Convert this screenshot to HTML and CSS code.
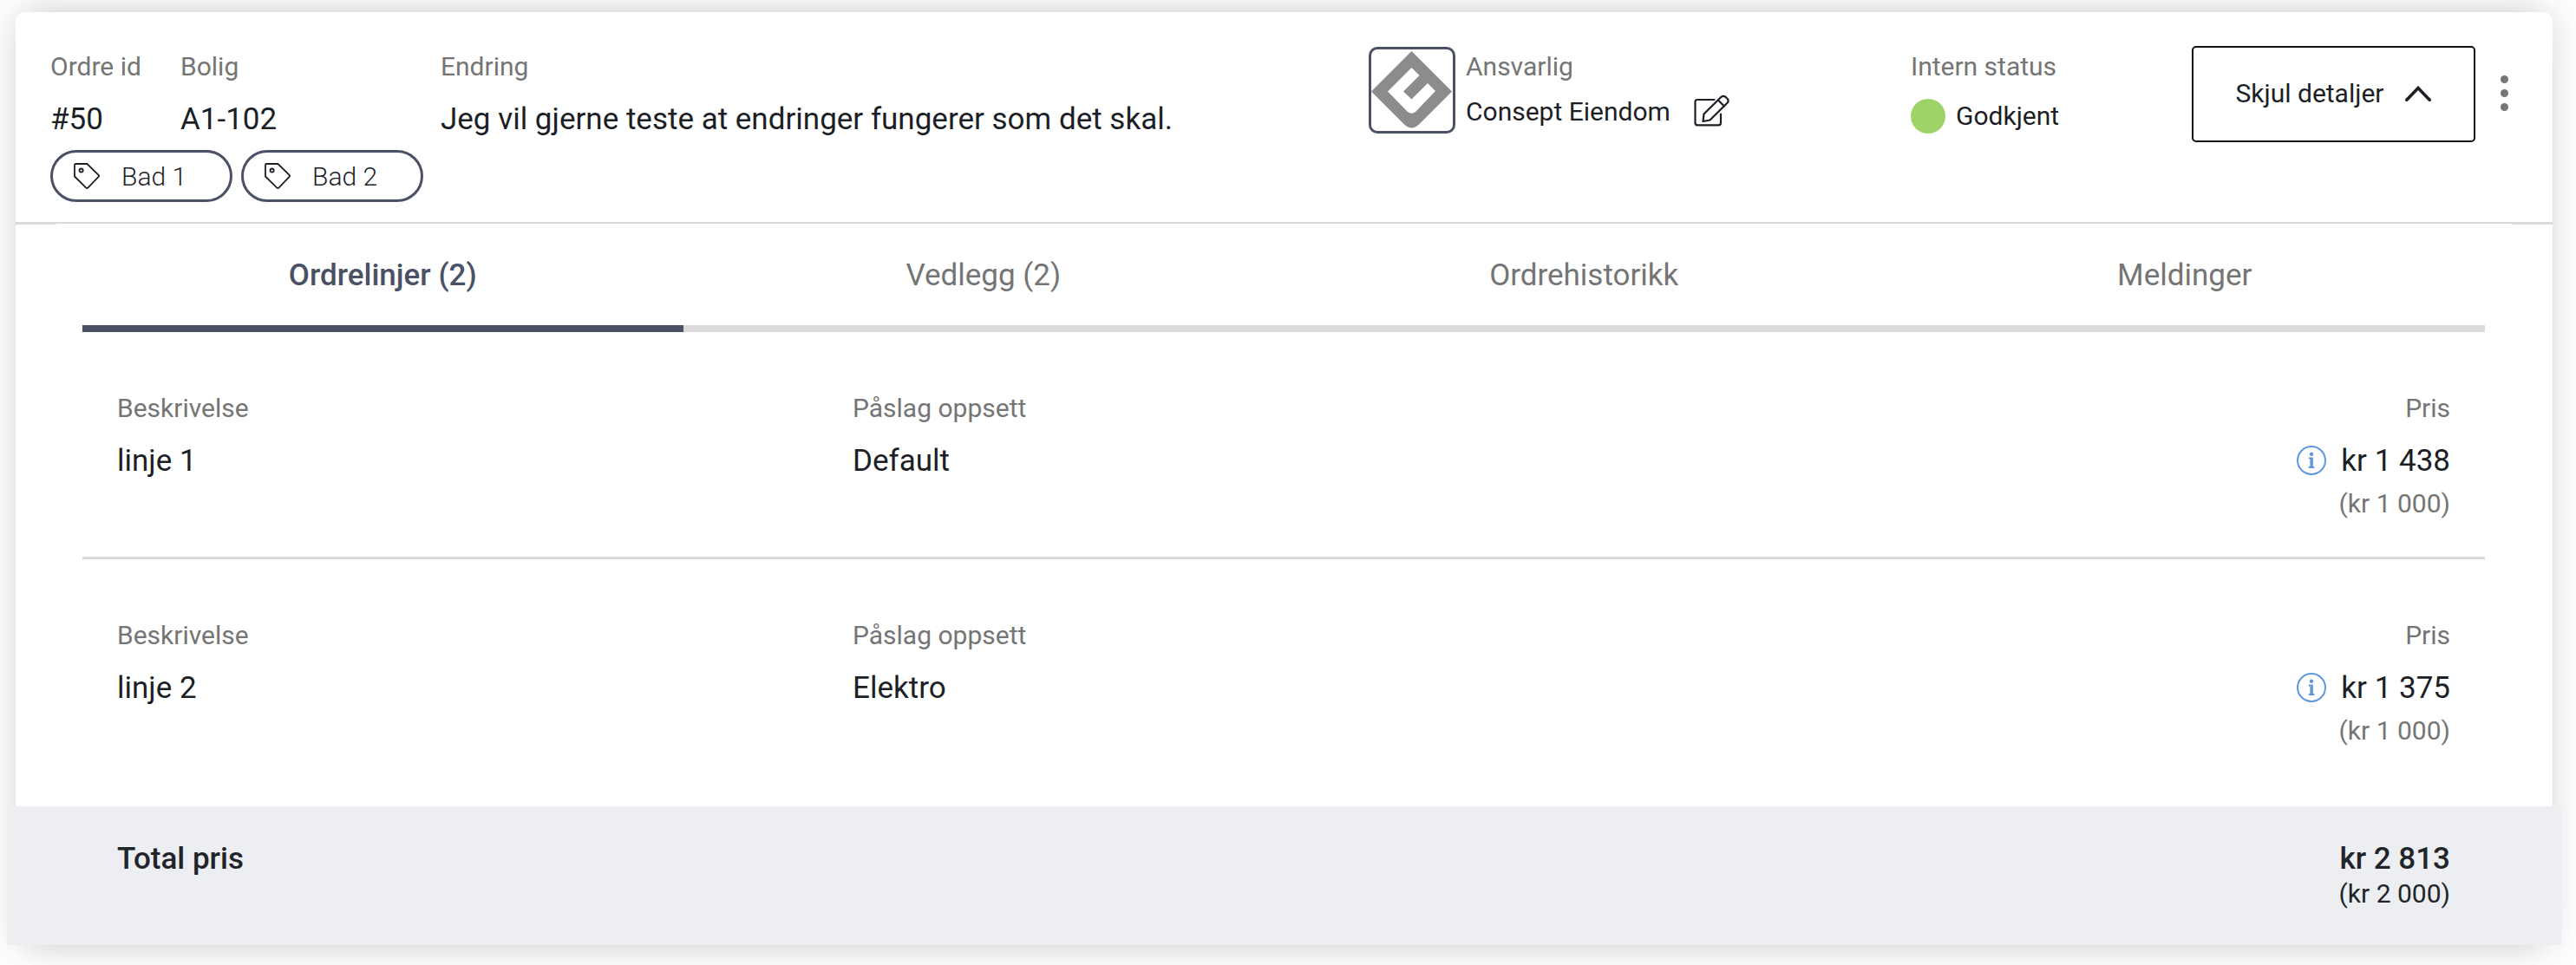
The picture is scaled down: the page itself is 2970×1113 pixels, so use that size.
FILE: index.html
```html
<!DOCTYPE html>
<html lang="no">
<head>
    <meta charset="UTF-8">
    <meta name="viewport" content="width=device-width, initial-scale=1.0">
    <title>Ordre #50</title>
    <link rel="stylesheet" href="styles.css">
</head>
<body>
    <div class="card">
        <div class="card-header">
            <div class="order">
                <div class="order-fields">
                    <div class="field order-id">
                        <div class="label">Ordre id</div>
                        <div class="value">#50</div>
                    </div>
                    <div class="field order-home">
                        <div class="label">Bolig</div>
                        <div class="value">A1-102</div>
                    </div>
                    <div class="field">
                        <div class="label">Endring</div>
                        <div class="value">Jeg vil gjerne teste at endringer fungerer som det skal.</div>
                    </div>
                </div>
                <div class="chips">
                    <div class="chip">
                        <svg class="chip-icon" viewBox="0 0 30 30">
                            <path d="M2.3 1H15.4L28.6 13.9Q29.5 15 28.6 16L16.4 28.6Q15.3 29.5 14.3 28.6L1 15.5V2.3Q1 1 2.3 1Z"/>
                            <circle cx="8.6" cy="8.6" r="2.1"/>
                        </svg>
                        <span>Bad 1</span>
                    </div>
                    <div class="chip">
                        <svg class="chip-icon" viewBox="0 0 30 30">
                            <path d="M2.3 1H15.4L28.6 13.9Q29.5 15 28.6 16L16.4 28.6Q15.3 29.5 14.3 28.6L1 15.5V2.3Q1 1 2.3 1Z"/>
                            <circle cx="8.6" cy="8.6" r="2.1"/>
                        </svg>
                        <span>Bad 2</span>
                    </div>
                </div>
            </div>

            <div class="responsible">
                <div class="logo">
                    <svg viewBox="0 0 94 94">
                        <path class="logo-shape" d="M46.5 2L93 48.5L55 86.5Q46.5 94.5 38 86.5L0 48.5Z"/>
                        <path class="logo-mark" d="M46.5 21L55.5 30L37 48.5L46.5 57.5L65 39L74 48L51.5 71.5Q46.5 76 41.5 71.5L19 48.5Z"/>
                    </svg>
                </div>
                <div class="responsible-text">
                    <div class="label">Ansvarlig</div>
                    <div class="responsible-name">
                        <span>Consept Eiendom</span>
                        <svg class="edit-icon" viewBox="0 0 42 38">
                            <path d="M23.5 6H4Q1.500 6 1.500 8.500V32.800Q1.500 35.300 4 35.300H28.500Q31 35.300 31 32.800V22.500"/>
                            <path d="M10.500 31L11.500 22.500L31.500 2.800Q34 .8 36.500 2.800L38.700 5Q40.500 7.500 38.700 9.500L18.500 29.500L10.500 31Z"/>
                            <path d="M28 6.500L35 13.500"/>
                        </svg>
                    </div>
                </div>
            </div>

            <div class="status">
                <div class="label">Intern status</div>
                <div class="status-value">
                    <span class="status-dot"></span>
                    <span>Godkjent</span>
                </div>
            </div>

            <button class="toggle">
                <span>Skjul detaljer</span>
                <svg class="chevron" viewBox="0 0 30 18">
                    <path d="M1.800 16.200L15 2.500L28.200 16.200"/>
                </svg>
            </button>

            <div class="menu">
                <span class="menu-dot"></span>
                <span class="menu-dot"></span>
                <span class="menu-dot"></span>
            </div>
        </div>

        <div class="card-body">
            <div class="tabs">
                <div class="tab active">Ordrelinjer (2)</div>
                <div class="tab">Vedlegg (2)</div>
                <div class="tab">Ordrehistorikk</div>
                <div class="tab">Meldinger</div>
            </div>

            <div class="line">
                <div class="line-description">
                    <div class="label">Beskrivelse</div>
                    <div class="value">linje 1</div>
                </div>
                <div class="line-markup">
                    <div class="label">Påslag oppsett</div>
                    <div class="value">Default</div>
                </div>
                <div class="line-price">
                    <div class="label">Pris</div>
                    <div class="value price">
                        <svg class="info-icon" viewBox="0 0 34 34">
                            <circle class="info-ring" cx="17" cy="17" r="16"/>
                            <circle cx="17" cy="9.700" r="2.200"/>
                            <path d="M13.800 13.500H18.800V24H20.300V26H13.800V24H15.400V15.500H13.800Z"/>
                        </svg>
                        <span>kr 1 438</span>
                    </div>
                    <div class="sub-price">(kr 1 000)</div>
                </div>
            </div>

            <div class="line">
                <div class="line-description">
                    <div class="label">Beskrivelse</div>
                    <div class="value">linje 2</div>
                </div>
                <div class="line-markup">
                    <div class="label">Påslag oppsett</div>
                    <div class="value">Elektro</div>
                </div>
                <div class="line-price">
                    <div class="label">Pris</div>
                    <div class="value price">
                        <svg class="info-icon" viewBox="0 0 34 34">
                            <circle class="info-ring" cx="17" cy="17" r="16"/>
                            <circle cx="17" cy="9.700" r="2.200"/>
                            <path d="M13.800 13.500H18.800V24H20.300V26H13.800V24H15.400V15.500H13.800Z"/>
                        </svg>
                        <span>kr 1 375</span>
                    </div>
                    <div class="sub-price">(kr 1 000)</div>
                </div>
            </div>
        </div>

        <div class="total">
            <div class="total-label">Total pris</div>
            <div class="total-price">
                <div class="total-sum">kr 2 813</div>
                <div class="total-sub">(kr 2 000)</div>
            </div>
        </div>
    </div>
</body>
</html>
```
FILE: styles.css
```css
*{
    padding: 0;
    margin: 0;
    box-sizing: border-box;
}
body{
    height: 1113px;
    padding: 14px 27px 0 18px;
    overflow: hidden;
    background: #fff;
    color: #212529;
    font-family: Roboto, "Liberation Sans", sans-serif;
    font-size: 30px;
    line-height: 40px;
}
.card{
    height: 1076px;
    border-radius: 10px;
    background: #fff;
    box-shadow: 0 0 45px rgba(0, 0, 0, 0.16),
                0 25px 30px -20px rgba(0, 0, 0, 0.06),
                0 -25px 30px -20px rgba(0, 0, 0, 0.05);
}
.label{
    color: #757575;
}
.value{
    margin-top: 16px;
    font-size: 35px;
    line-height: 50px;
    color: #1d1f26;
}

/* header */
.card-header{
    display: flex;
    align-items: flex-start;
    height: 244px;
    padding: 39px 0 0 40px;
    border-bottom: 2px solid #dadada;
}
.order{
    width: 1520px;
    padding-top: 4px;
}
.order-fields{
    display: flex;
}
.order-id{
    width: 150px;
}
.order-home{
    width: 300px;
}
.chips{
    display: flex;
    gap: 10px;
    margin-top: 10px;
}
.chip{
    display: flex;
    align-items: center;
    gap: 25px;
    width: 210px;
    height: 60px;
    padding-left: 24px;
    border: 3px solid #4b5165;
    border-radius: 30px;
    font-weight: 300;
}
.chip span{
    padding-top: 1px;
}
.chip-icon{
    width: 30px;
    height: 30px;
    fill: none;
    stroke: #1d1f26;
    stroke-width: 1.8;
}
.responsible{
    display: flex;
    gap: 12px;
    width: 625px;
    padding-top: 1px;
}
.logo{
    width: 100px;
    height: 100px;
    border: 3px solid #4b5165;
    border-radius: 10px;
}
.logo svg{
    display: block;
    width: 94px;
    height: 94px;
}
.logo-shape{
    fill: #8c8c8c;
}
.logo-mark{
    fill: #fff;
}
.responsible-text{
    padding-top: 3px;
}
.responsible-name{
    display: flex;
    gap: 27px;
    margin-top: 12px;
    color: #1d1f26;
}
.edit-icon{
    width: 42px;
    height: 38px;
    fill: none;
    stroke: #1d1f26;
    stroke-width: 2.2;
    stroke-linejoin: round;
    stroke-linecap: round;
}
.status{
    width: 324px;
    padding-top: 4px;
}
.status-value{
    display: flex;
    align-items: center;
    gap: 12px;
    margin-top: 17px;
    color: #1d1f26;
}
.status-dot{
    width: 40px;
    height: 40px;
    border-radius: 50%;
    background: #9ed36a;
}
.toggle{
    display: flex;
    align-items: center;
    justify-content: center;
    gap: 25px;
    width: 327px;
    height: 111px;
    padding-bottom: 2px;
    border: 2px solid #111;
    border-radius: 5px;
    background: #fff;
    color: #1d1f26;
    font: inherit;
}
.chevron{
    width: 30px;
    height: 18px;
    fill: none;
    stroke: #1d1f26;
    stroke-width: 3.6;
    stroke-linecap: round;
}
.menu{
    display: flex;
    flex-direction: column;
    gap: 7px;
    margin: 34px 0 0 29px;
}
.menu-dot{
    width: 9px;
    height: 9px;
    border-radius: 50%;
    background: #757575;
}

/* order lines */
.card-body{
    height: 672px;
    padding: 0 78px 0 77px;
    /* 1px extension of the header border at both ends */
    background: linear-gradient(#dadada, #dadada) left top / 47px 1px no-repeat,
                linear-gradient(#dadada, #dadada) right top / 47px 1px no-repeat;
}
.tabs{
    display: flex;
}
.tab{
    flex: 1;
    height: 125px;
    padding-top: 35px;
    border-bottom: 8px solid #dadada;
    font-size: 35px;
    line-height: 50px;
    text-align: center;
    color: #757575;
}
.tab.active{
    border-color: #4b5165;
    color: #4b5165;
    font-weight: 500;
}
.line{
    display: flex;
    height: 262px;
    padding: 68px 40px 0;
    border-bottom: 3px solid #dadada;
}
.line:last-child{
    border-bottom: none;
}
.line-description{
    width: 848px;
}
.line-price{
    margin-left: auto;
    text-align: right;
}
.price{
    display: flex;
    align-items: center;
    justify-content: flex-end;
    gap: 17px;
}
.info-icon{
    width: 34px;
    height: 34px;
    margin-bottom: 2px;
    fill: #6197df;
}
.info-ring{
    fill: none;
    stroke: #6197df;
    stroke-width: 2;
}
.sub-price{
    margin-top: 4px;
    color: #757575;
}

/* total */
.total{
    display: flex;
    justify-content: space-between;
    height: 160px;
    margin: 0 -10px;
    padding: 39px 128px 0 127px;
    background: #edeef2;
}
.total-label,
.total-sum{
    font-size: 35px;
    font-weight: 500;
    line-height: 44px;
}
.total-price{
    text-align: right;
}
.total-sub{
    line-height: 35px;
}
```
